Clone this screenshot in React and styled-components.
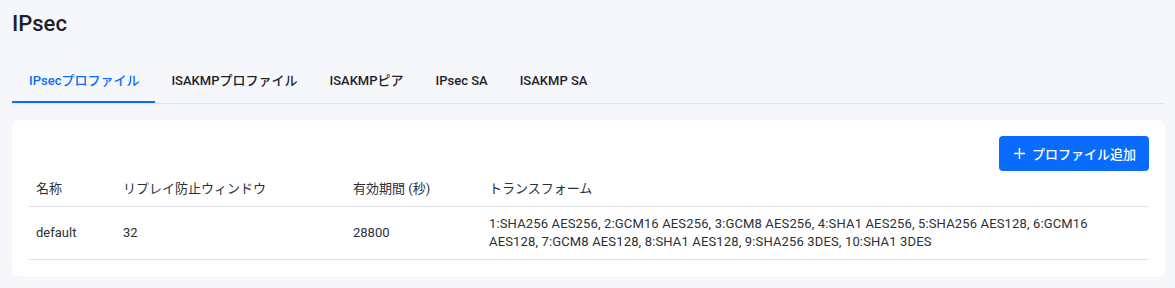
import styled, { createGlobalStyle } from 'styled-components'

const GlobalStyle = createGlobalStyle`
    body {
        margin: 0;
        background: #f6f7fb;
        font-family: Roboto, "Noto Sans CJK JP", sans-serif;
        color: #2b2f36;
    }
`

const Page = styled.div`
    padding: 10px 10px 12px 12px;
`

const Title = styled.h1`
    margin: 0;
    font-size: 22px;
    line-height: 28px;
    font-weight: 500;
    color: #1d2129;
`

const TabList = styled.div`
    display: flex;
    margin-top: 20px;
    padding-left: 1px;
    border-bottom: 1px solid #e1e3e8;
`

const Tab = styled.div`
    padding: 13px 16px 10px;
    margin-left: ${(p) => (p.$active ? '-1px' : '0')};
    padding-left: ${(p) => (p.$active ? '17px' : '16px')};
    font-size: 13px;
    line-height: 20px;
    font-weight: 500;
    color: ${(p) => (p.$active ? '#0a6cff' : '#1d2129')};
    border-bottom: 2px solid ${(p) => (p.$active ? '#0a6cff' : 'transparent')};
`

const Card = styled.div`
    margin-top: 16px;
    background: #ffffff;
    border-radius: 8px;
    padding: 16px;
`

const Toolbar = styled.div`
    display: flex;
    justify-content: flex-end;
`

const AddButton = styled.button`
    display: flex;
    align-items: center;
    gap: 7px;
    height: 35px;
    padding: 0 13px 0 15px;
    border: none;
    border-radius: 4px;
    background: #0a6cff;
    color: #ffffff;
    font-family: inherit;
    font-size: 13px;
    font-weight: 500;
`

const Table = styled.table`
    width: 100%;
    border-collapse: collapse;
    table-layout: fixed;
    font-size: 13px;
    line-height: 18px;
`

const Th = styled.th`
    box-sizing: border-box;
    width: ${(p) => p.$width || 'auto'};
    text-align: left;
    font-weight: 400;
    color: #2b2f36;
    padding: 9px 8px 8px;
    border-bottom: 1px solid #e1e3e8;
`

const Td = styled.td`
    padding: 8px ${(p) => (p.$wide ? '16px' : '8px')} 8px 8px;
    vertical-align: middle;
    color: #2b2f36;
    letter-spacing: ${(p) => (p.$wide ? '0.15px' : 'normal')};
    border-bottom: 1px solid #e1e3e8;
`

const PlusIcon = () => (
    <svg width="11" height="11" viewBox="0 0 11 11" fill="none" stroke="currentColor" strokeWidth="1.4">
        <path d="M5.5 0v11M0 5.5h11" />
    </svg>
)

const tabs = ['IPsecプロファイル', 'ISAKMPプロファイル', 'ISAKMPピア', 'IPsec SA', 'ISAKMP SA']

export default function App() {
    return (
        <>
            <GlobalStyle />
            <Page>
                <Title>IPsec</Title>
                <TabList>
                    {tabs.map((t, i) => (
                        <Tab key={t} $active={i === 0}>{t}</Tab>
                    ))}
                </TabList>
                <Card>
                    <Toolbar>
                        <AddButton>
                            <PlusIcon />
                            プロファイル追加
                        </AddButton>
                    </Toolbar>
                    <Table>
                        <thead>
                            <tr>
                                <Th $width="87px">名称</Th>
                                <Th $width="230px">リプレイ防止ウィンドウ</Th>
                                <Th $width="136px">有効期間 (秒)</Th>
                                <Th>トランスフォーム</Th>
                            </tr>
                        </thead>
                        <tbody>
                            <tr>
                                <Td>default</Td>
                                <Td>32</Td>
                                <Td>28800</Td>
                                <Td $wide>1:SHA256 AES256, 2:GCM16 AES256, 3:GCM8 AES256, 4:SHA1 AES256, 5:SHA256 AES128, 6:GCM16 AES128, 7:GCM8 AES128, 8:SHA1 AES128, 9:SHA256 3DES, 10:SHA1 3DES</Td>
                            </tr>
                        </tbody>
                    </Table>
                </Card>
            </Page>
        </>
    )
}
